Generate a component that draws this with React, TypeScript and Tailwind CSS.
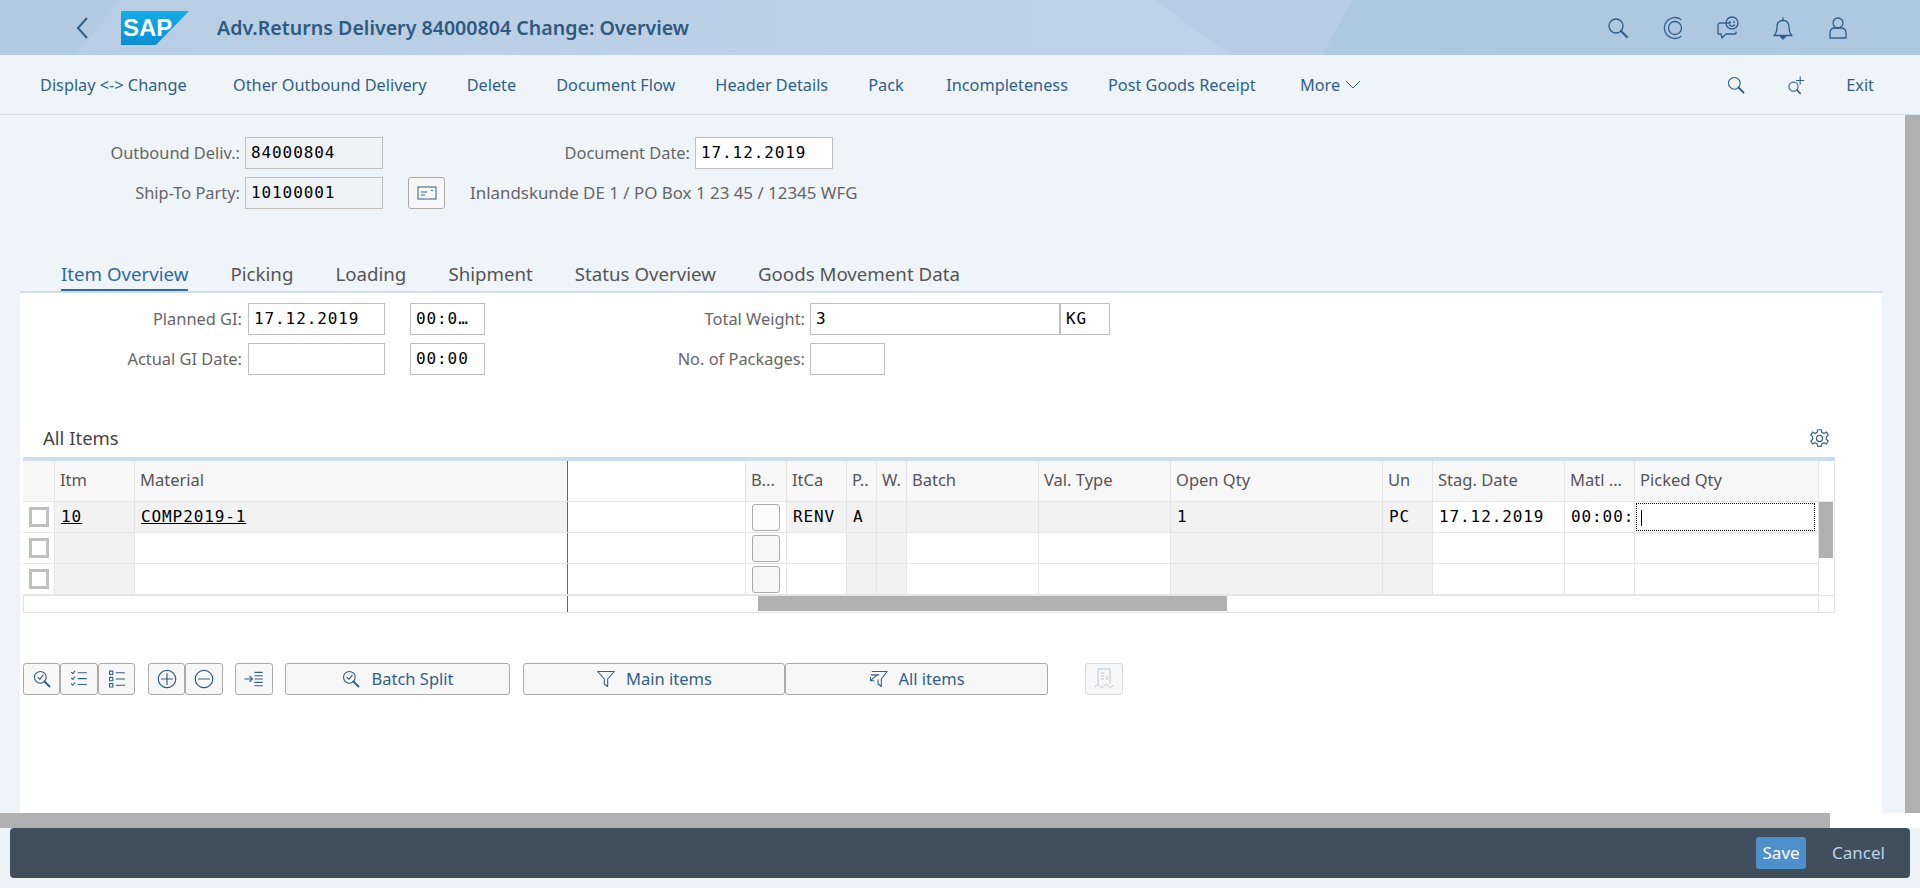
import type { ReactNode } from "react";

const uiFont = "font-['Noto_Sans','Open_Sans',sans-serif]";
const monoFont = "font-['DejaVu_Sans_Mono',monospace]";

function Icon({ size = 24, children }: { size?: number; children: ReactNode }) {
  return (
    <svg width={size} height={size} viewBox="0 0 24 24" fill="none" stroke="#2f5f8a" strokeWidth="1.3" strokeLinecap="round" strokeLinejoin="round">
      {children}
    </svg>
  );
}

const SearchGlyph = () => (
  <>
    <circle cx="10" cy="10" r="7" />
    <path d="M15 15l6 6" strokeWidth="2.2" />
  </>
);

const CheckLens = () => (
  <>
    <circle cx="10" cy="10" r="7" />
    <path d="M15 15l6 6" strokeWidth="2.2" />
    <path d="M7 10l2.4 2.4 4-5" />
  </>
);

function Field({ value = "", width, readOnly = false, className = "" }: { value?: string; width: string; readOnly?: boolean; className?: string }) {
  return (
    <div className={`h-8 ${width} border border-[#bfbfbf] ${readOnly ? "bg-[#eff3f6]" : "bg-white"} pl-[5px] ${monoFont} text-[16px] tracking-[0.9px] leading-[29px] text-black overflow-hidden whitespace-nowrap ${className}`}>
      {value}
    </div>
  );
}

function ToolBtn({ width, children, className = "" }: { width: string; children: ReactNode; className?: string }) {
  return (
    <button type="button" className={`h-8 ${width} flex items-center justify-center gap-[10px] rounded-[3px] border border-[#ababab] bg-[#f7f7f7] text-[16.5px] text-[#2f5f8a] ${className}`}>
      {children}
    </button>
  );
}

const columns = [
  { label: "Itm", w: "w-[80px]" },
  { label: "Material", w: "w-[433px]" },
  { label: "", w: "w-[178px]" },
  { label: "B...", w: "w-[41px]" },
  { label: "ItCa", w: "w-[60px]" },
  { label: "P..", w: "w-[30px]" },
  { label: "W.", w: "w-[30px]" },
  { label: "Batch", w: "w-[132px]" },
  { label: "Val. Type", w: "w-[132px]" },
  { label: "Open Qty", w: "w-[212px]" },
  { label: "Un", w: "w-[50px]" },
  { label: "Stag. Date", w: "w-[132px]" },
  { label: "Matl ...", w: "w-[70px]" },
  { label: "Picked Qty", w: "w-[184px]" },
];

const rows = [
  { values: ["10", "COMP2019-1", "", "", "RENV", "A", "", "", "", "1", "PC", "17.12.2019", "00:00:", ""], gray: [0, 1, 4, 5, 6, 7, 8, 9, 10] },
  { values: Array(14).fill(""), gray: [0, 5, 6, 9, 10] },
  { values: Array(14).fill(""), gray: [0, 5, 6, 9, 10] },
];

const menu = [
  { label: "Display <-> Change", w: "w-[153px]" },
  { label: "Other Outbound Delivery", w: "" },
  { label: "Delete", w: "" },
  { label: "Document Flow", w: "" },
  { label: "Header Details", w: "" },
  { label: "Pack", w: "w-[38px]" },
  { label: "Incompleteness", w: "" },
  { label: "Post Goods Receipt", w: "w-[152px]" },
];
const tabs = ["Item Overview", "Picking", "Loading", "Shipment", "Status Overview", "Goods Movement Data"];

function ItemsTable() {
  return (
    <div className="ml-[3px] w-[1812px]">
      <div className="h-1 bg-[#cfdeed]" />
      <div className="flex">
        <div className="w-[1795px]">
          <div className="flex h-[41px] border-b border-[#e5e5e5] bg-[#f7f7f7]">
            <div className="w-[32px] shrink-0 border-r border-[#e5e5e5]" />
            {columns.map((c, i) => (
              <div key={i} className={`${c.w} shrink-0 border-r ${i === 1 ? "border-[#666]" : "border-[#e5e5e5]"} ${i === 2 ? "bg-white" : ""} pl-[5px] leading-[38px] text-[16.5px] text-[#555] overflow-hidden whitespace-nowrap`}>
                {c.label}
              </div>
            ))}
          </div>
          {rows.map((r, ri) => (
            <div key={ri} className="flex h-[31px] border-b border-[#e5e5e5]">
              <div className="w-[32px] shrink-0 border-r border-[#e5e5e5] flex items-center justify-center">
                <div className="size-5 border-[3px] border-[#bfbfbf] bg-white" />
              </div>
              {columns.map((c, i) => (
                <div key={i} className={`${c.w} shrink-0 border-r ${i === 1 ? "border-[#666]" : "border-[#e5e5e5]"} ${r.gray.includes(i) ? "bg-[#f2f2f2]" : "bg-white"} relative flex items-center pl-[6px] ${monoFont} text-[16px] tracking-[0.9px] text-black overflow-hidden whitespace-nowrap`}>
                  {i === 3 && <div className={`h-[27px] w-7 rounded-[3px] border border-[#ababab] ${ri === 0 ? "bg-[#fbfbfb]" : "bg-[#f7f7f7]"}`} />}
                  {i < 2 ? <span className="underline">{r.values[i]}</span> : r.values[i]}
                  {i === 13 && ri === 0 && (
                    <div className="absolute left-[1px] right-[3px] inset-y-[1px] border border-dotted border-black">
                      <div className="ml-[4px] mt-[6px] h-4 w-px bg-black" />
                    </div>
                  )}
                </div>
              ))}
            </div>
          ))}
        </div>
        <div className="w-[17px] border-x border-[#e5e5e5]">
          <div className="h-[41px] border-b border-[#e5e5e5] bg-white" />
          <div className="h-[56px] w-[14px] bg-[#b0b0b0]" />
        </div>
      </div>
      <div className="flex h-[18px] border-y border-[#e5e5e5]">
        <div className="w-[545px] border-r border-[#666] border-l border-l-[#e5e5e5]" />
        <div className="ml-[190px] h-[15px] w-[469px] bg-[#b0b0b0]" />
        <div className="ml-auto w-[17px] border-x border-[#e5e5e5]" />
      </div>
    </div>
  );
}

export default function App() {
  return (
    <div className={`flex h-[888px] w-[1920px] flex-col overflow-hidden bg-white ${uiFont}`}>
      <header className="relative flex h-[55px] shrink-0 items-center overflow-hidden bg-[linear-gradient(90deg,#b7cde4_0,#bfd3e8_1200px)]">
        <div className="absolute inset-0 bg-[#b2cae3] [clip-path:polygon(0_0,120px_0,75px_100%,0_100%)]" />
        <div className="absolute inset-0 bg-[#b8cde4] [clip-path:polygon(1155px_0,1352px_0,1322px_100%,1230px_100%)]" />
        <div className="absolute inset-0 bg-[linear-gradient(100deg,#b3cae2,#aec8e2)] [clip-path:polygon(1352px_0,100%_0,100%_100%,1322px_100%)]" />
        <svg width="16" height="24" viewBox="0 0 16 24" className="relative ml-[75px]" fill="none" stroke="#2f5f8a" strokeWidth="2">
          <path d="M12 2L3 12l9 10" />
        </svg>
        <div className="relative ml-[30px] h-[34px] w-[68px]">
          <svg width="68" height="34" viewBox="0 0 68 34" className="absolute inset-0">
            <defs>
              <linearGradient id="sapBlue" x1="0" y1="0" x2="0" y2="1">
                <stop offset="0" stopColor="#12ade6" />
                <stop offset="1" stopColor="#0b8fd3" />
              </linearGradient>
            </defs>
            <polygon points="0,0 68,0 35,34 0,34" fill="url(#sapBlue)" />
          </svg>
          <span className="absolute left-[2px] top-[2px] font-['Liberation_Sans',sans-serif] text-[24px] leading-[30px] font-bold text-white">SAP</span>
        </div>
        <h1 className="relative ml-[28px] text-[19.6px] font-semibold text-[#2f5a80]">Adv.Returns Delivery 84000804 Change: Overview</h1>
        <div className="relative ml-auto mr-[70px] flex items-center gap-[31px]">
          <Icon><SearchGlyph /></Icon>
          <Icon>
            <path d="M20 3.500a10.500 10.500 0 1 0 0 17" />
            <circle cx="14" cy="12" r="6.500" />
          </Icon>
          <Icon>
            <path d="M14 7H4a2 2 0 0 0-2 2v8a1 1 0 0 0 1 1h2l1 4 4-4h9a1 1 0 0 0 1-1v-1" />
            <circle cx="16" cy="7" r="6" />
            <path d="M14 5.500v1M18 5.500v1M13.500 9c1.500 1.500 3.500 1.500 5 0" />
          </Icon>
          <Icon>
            <path d="M3 19.500h18c-2-2-3-4-3-8.500 0-4-2-6.500-6-6.500S6 7 6 11c0 4.500-1 6.500-3 8.500z" />
            <path d="M12 4.500V2" />
            <path d="M9.500 20.500h5L12 23z" fill="#2f5f8a" />
          </Icon>
          <Icon>
            <circle cx="12" cy="7" r="5" />
            <path d="M4 22v-5c0-3 2-5 5-5h6c3 0 5 2 5 5v5z" />
          </Icon>
        </div>
      </header>

      <nav className="flex h-[60px] shrink-0 items-center border-b border-[#d8e2ed] bg-[#eff4f9] pl-[40px] pr-[46px] pt-px text-[16.3px] text-[#2f5f8a]">
        <div className="flex gap-[40px]">
          {menu.map((m) => (
            <span key={m.label} className={`${m.w} whitespace-nowrap`}>{m.label}</span>
          ))}
          <span className="flex items-center gap-[5px]">
            More
            <svg width="16" height="10" viewBox="0 0 16 10" fill="none" stroke="#2f5f8a">
              <path d="M1 1l7 7 7-7" />
            </svg>
          </span>
        </div>
        <div className="ml-auto flex items-center gap-[40px]">
          <Icon size={20}><SearchGlyph /></Icon>
          <Icon size={20}>
            <circle cx="9" cy="14" r="5.500" />
            <path d="M13 18l4 4" strokeWidth="2" />
            <path d="M17 2v9M12.500 6.500h9" />
          </Icon>
          <span>Exit</span>
        </div>
      </nav>

      <div className="flex h-[698px] shrink-0">
        <main className="flex w-[1905px] flex-col bg-[#eff4f9]">
          <section className="flex flex-col gap-2 pt-[22px] text-[16.4px] text-[#666]">
            <div className="flex items-center">
              <label className="w-[240px] text-right">Outbound Deliv.:</label>
              <Field value="84000804" width="w-[138px]" readOnly className="ml-[5px]" />
              <label className="w-[307px] text-right">Document Date:</label>
              <Field value="17.12.2019" width="w-[138px]" className="ml-[5px]" />
            </div>
            <div className="flex items-center">
              <label className="w-[240px] text-right">Ship-To Party:</label>
              <Field value="10100001" width="w-[138px]" readOnly className="ml-[5px]" />
              <button type="button" className="ml-[25px] flex h-8 w-[37px] items-center justify-center rounded-[3px] border border-[#ababab] bg-[#f7f7f7]">
                <svg width="20" height="14" viewBox="0 0 20 14" fill="none" stroke="#2f5f8a">
                  <rect x="1" y="1" width="18" height="12" />
                  <path d="M4 6h6M4 9h4M14 4.500h2" />
                </svg>
              </button>
              <span className="ml-[25px] text-[16.9px]">Inlandskunde DE 1 / PO Box 1 23 45 / 12345 WFG</span>
            </div>
          </section>

          <div className="mt-[49px] flex gap-[42px] pl-[61px] text-[18.7px] leading-[32px] text-[#555]">
            {tabs.map((t, i) => (
              <div key={t} className={`h-[33px] ${i === 0 ? "border-b-[2px] border-[#2f6a9f] text-[#2f6a9f]" : ""}`}>{t}</div>
            ))}
          </div>

          <div className="ml-[20px] mr-[23px] flex flex-1 flex-col border-t-2 border-[#cfdeed] bg-white">
            <div className="mt-[10px] flex flex-col gap-2 text-[16.4px] text-[#666]">
              <div className="flex items-center">
                <label className="w-[222px] text-right">Planned GI:</label>
                <Field value="17.12.2019" width="w-[137px]" className="ml-[6px]" />
                <Field value="00:0…" width="w-[75px]" className="ml-[25px]" />
                <label className="w-[320px] text-right">Total Weight:</label>
                <Field value="3" width="w-[250px]" className="ml-[5px]" />
                <Field value="KG" width="w-[50px]" />
              </div>
              <div className="flex items-center">
                <label className="w-[222px] text-right">Actual GI Date:</label>
                <Field width="w-[137px]" className="ml-[6px]" />
                <Field value="00:00" width="w-[75px]" className="ml-[25px]" />
                <label className="w-[320px] text-right">No. of Packages:</label>
                <Field width="w-[75px]" className="ml-[5px]" />
              </div>
            </div>

            <div className="mt-[44px] flex h-[38px] items-center justify-between pl-[23px] pr-[52px]">
              <span className="text-[18.5px] text-[#444]">All Items</span>
              <Icon size={21}>
                <circle cx="12" cy="12" r="3.500" />
                <path d="M10 2h4l.7 3 2.500 1.200 2.800-1.500 2 3.400-2.300 2 0 2.800 2.300 2-2 3.400-2.800-1.500-2.500 1.200-.7 3h-4l-.7-3-2.500-1.200-2.800 1.500-2-3.400 2.300-2 0-2.800-2.300-2 2-3.400 2.800 1.500 2.500-1.200z" />
              </Icon>
            </div>

            <ItemsTable />

            <div className="ml-[3px] mt-[50px] flex items-center">
              <ToolBtn width="w-[37px]"><Icon size={20}><CheckLens /></Icon></ToolBtn>
              <ToolBtn width="w-[38px]">
                <Icon size={20}>
                  <path d="M3 4l1.500 1.500L7 2.500M3 11l1.500 1.500L7 9.500M3 18l1.500 1.500L7 16.500M11 4.500h10M11 11.500h10M11 18.500h10" />
                </Icon>
              </ToolBtn>
              <ToolBtn width="w-[37px]">
                <Icon size={20}>
                  <rect x="3" y="2.500" width="4" height="4" />
                  <rect x="3" y="10" width="4" height="4" />
                  <rect x="3" y="17.500" width="4" height="4" />
                  <path d="M11 4.500h10M11 12h10M11 19.500h10" />
                </Icon>
              </ToolBtn>
              <ToolBtn width="w-[37px]" className="ml-[13px]">
                <Icon size={22}>
                  <circle cx="12" cy="12" r="9.500" />
                  <path d="M12 6v12M6 12h12" />
                </Icon>
              </ToolBtn>
              <ToolBtn width="w-[38px]">
                <Icon size={22}>
                  <circle cx="12" cy="12" r="9.500" />
                  <path d="M6 12h12" />
                </Icon>
              </ToolBtn>
              <ToolBtn width="w-[38px]" className="ml-[12px]">
                <Icon size={20}>
                  <path d="M1 12h9M7 9l3 3-3 3M13 4h9M13 8h9M13 12h9M13 16h9M13 20h9" />
                </Icon>
              </ToolBtn>
              <ToolBtn width="w-[225px]" className="ml-[12px]"><Icon size={20}><CheckLens /></Icon>Batch Split</ToolBtn>
              <ToolBtn width="w-[262px]" className="ml-[13px]">
                <Icon size={20}><path d="M2 3h20l-8 9v9l-4-3v-6z" /></Icon>Main items
              </ToolBtn>
              <ToolBtn width="w-[263px]">
                <Icon size={20}>
                  <path d="M5 3h18l-7 9v9l-4-3v-5" />
                  <path d="M4 7h9M3 14l7-6M3 14v-4M3 14h4" />
                </Icon>All items
              </ToolBtn>
              <button type="button" className="ml-[37px] flex h-8 w-[38px] items-center justify-center rounded-[3px] border border-[#d8d8d8] bg-[#f7f7f7]">
                <svg width="20" height="22" viewBox="0 0 20 22" fill="none" stroke="#b4c4d4">
                  <path d="M4 16V1h12v15" />
                  <path d="M7 5h3M7 8h3M7 11h3M13 8v4" />
                  <path d="M1 19c2-3 3-3 4.500-1s2.500 2 4.500 0 3-2 4.500 0 2.500 2 4.500-1" />
                </svg>
              </button>
            </div>
          </div>
        </main>
        <div className="w-[15px] bg-[#b0b0b0]" />
      </div>

      <div className="h-[15px] w-[1830px] shrink-0 bg-[#b0b0b0]" />

      <div className="flex flex-1 flex-col bg-[#eef2f6]">
        <footer className="ml-[10px] flex h-[50px] w-[1900px] items-center justify-end gap-[26px] rounded-[4px] bg-[#414e5b] pr-[25px] text-[17px]">
          <button type="button" className="h-8 w-[50px] rounded-[3px] bg-[#4d90cc] text-white">Save</button>
          <button type="button" className="text-[#b9d3ec]">Cancel</button>
        </footer>
      </div>
    </div>
  );
}
